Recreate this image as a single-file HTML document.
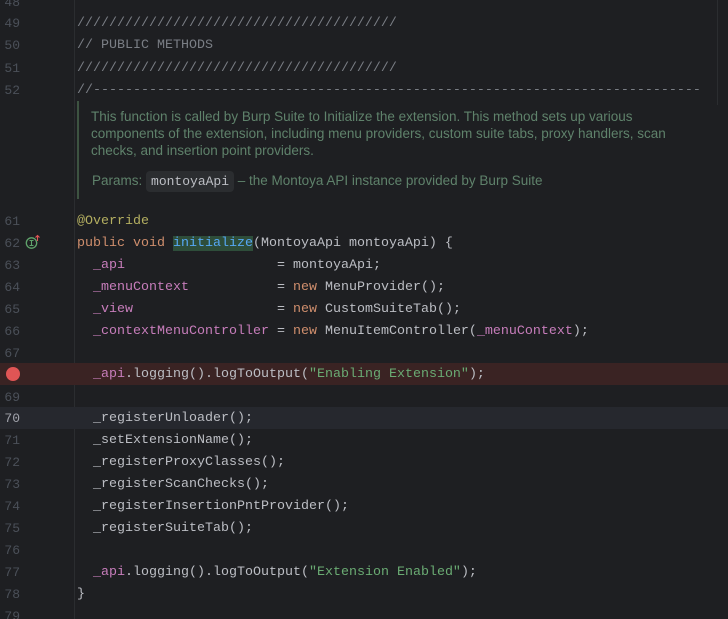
<!DOCTYPE html>
<html><head><style>
html,body{margin:0;padding:0;background:#1e1f22;width:728px;height:619px;overflow:hidden}
body{position:relative;font-family:"Liberation Mono",monospace;font-size:13.33px;color:#bcbec4}
.ln{position:absolute;left:0;width:20px;text-align:right;color:#4b5059;height:22px;line-height:22px;font-size:13px}
.c{position:absolute;left:77px;height:22px;line-height:22px;white-space:pre}
.row{position:absolute;left:0;width:728px;height:22px}
.cm{color:#7a7e85}
.kw{color:#cf8e6d}
.f{color:#c77dbb}
.s{color:#6aab73}
.an{color:#b3ae60}
.m{color:#56a8f5}
.doc{position:absolute;left:77px;top:101px;width:640px;height:98px;border-left:2px solid #3d5341;font-family:"Liberation Sans",sans-serif;font-size:13.5px;color:#5f826b}
.doc p{margin:0;position:absolute;left:12px;line-height:17px;white-space:nowrap}
.chip{display:inline-block;background:#2b2d30;border-radius:4px;color:#bcbec4;font-family:"Liberation Mono",monospace;font-size:13px;padding:0 5px;line-height:21px}
</style></head><body>
<div style="position:absolute;left:74px;top:0;width:1px;height:619px;background:#2b2d30"></div>
<div style="position:absolute;left:717px;top:0;width:1px;height:105px;background:#2b2d30"></div>
<div class="row" style="top:363px;background:#3a2323"></div>
<div class="row" style="top:407px;background:#26282e"></div>

<div class="ln" style="top:-8px">48</div>
<div class="ln" style="top:13px">49</div><div class="c cm" style="top:13px">////////////////////////////////////////</div>
<div class="ln" style="top:35px">50</div><div class="c cm" style="top:35px">// PUBLIC METHODS</div>
<div class="ln" style="top:58px">51</div><div class="c cm" style="top:58px">////////////////////////////////////////</div>
<div class="ln" style="top:80px">52</div><div class="c cm" style="top:80px">//----------------------------------------------------------------------------</div>

<div class="doc">
<p style="top:7px">This function is called by Burp Suite to Initialize the extension. This method sets up various<br>components of the extension, including menu providers, custom suite tabs, proxy handlers, scan<br>checks, and insertion point providers.</p>
<p style="top:70px;left:13px">Params: <span class="chip">montoyaApi</span> – the Montoya API instance provided by Burp Suite</p>
</div>

<div class="ln" style="top:211px">61</div><div class="c an" style="top:211px">@Override</div>
<div class="ln" style="top:233px">62</div>
<svg style="position:absolute;left:25px;top:234px" width="16" height="16"><circle cx="6.5" cy="9" r="5.2" fill="none" stroke="#5fa36b" stroke-width="1.3"/><path d="M4.5 6.5h4M6.5 6.5v5M4.5 11.5h4" stroke="#5fa36b" stroke-width="1.1" fill="none"/><path d="M12.5 7V1.5M10.5 3.5l2-2 2 2" stroke="#e05555" stroke-width="1.1" fill="none"/></svg>
<div class="c" style="top:233px"><span class="kw">public void </span><span class="m" style="background:#2e4d3a">initialize</span>(MontoyaApi montoyaApi) {</div>
<div class="ln" style="top:255px">63</div><div class="c" style="top:255px">  <span class="f">_api</span>                   = montoyaApi;</div>
<div class="ln" style="top:277px">64</div><div class="c" style="top:277px">  <span class="f">_menuContext</span>           = <span class="kw">new</span> MenuProvider();</div>
<div class="ln" style="top:299px">65</div><div class="c" style="top:299px">  <span class="f">_view</span>                  = <span class="kw">new</span> CustomSuiteTab();</div>
<div class="ln" style="top:321px">66</div><div class="c" style="top:321px">  <span class="f">_contextMenuController</span> = <span class="kw">new</span> MenuItemController(<span class="f">_menuContext</span>);</div>
<div class="ln" style="top:343px">67</div>
<div style="position:absolute;left:6px;top:367px;width:14px;height:14px;border-radius:50%;background:#e05555"></div>
<div class="c" style="top:364px">  <span class="f">_api</span>.logging().logToOutput(<span class="s">"Enabling Extension"</span>);</div>
<div class="ln" style="top:387px">69</div>
<div class="ln" style="top:408px;color:#a1a3ab">70</div><div class="c" style="top:408px">  _registerUnloader();</div>
<div class="ln" style="top:430px">71</div><div class="c" style="top:430px">  _setExtensionName();</div>
<div class="ln" style="top:452px">72</div><div class="c" style="top:452px">  _registerProxyClasses();</div>
<div class="ln" style="top:474px">73</div><div class="c" style="top:474px">  _registerScanChecks();</div>
<div class="ln" style="top:496px">74</div><div class="c" style="top:496px">  _registerInsertionPntProvider();</div>
<div class="ln" style="top:518px">75</div><div class="c" style="top:518px">  _registerSuiteTab();</div>
<div class="ln" style="top:540px">76</div>
<div class="ln" style="top:562px">77</div><div class="c" style="top:562px">  <span class="f">_api</span>.logging().logToOutput(<span class="s">"Extension Enabled"</span>);</div>
<div class="ln" style="top:584px">78</div><div class="c" style="top:584px">}</div>
<div class="ln" style="top:606px">79</div>
</body></html>
